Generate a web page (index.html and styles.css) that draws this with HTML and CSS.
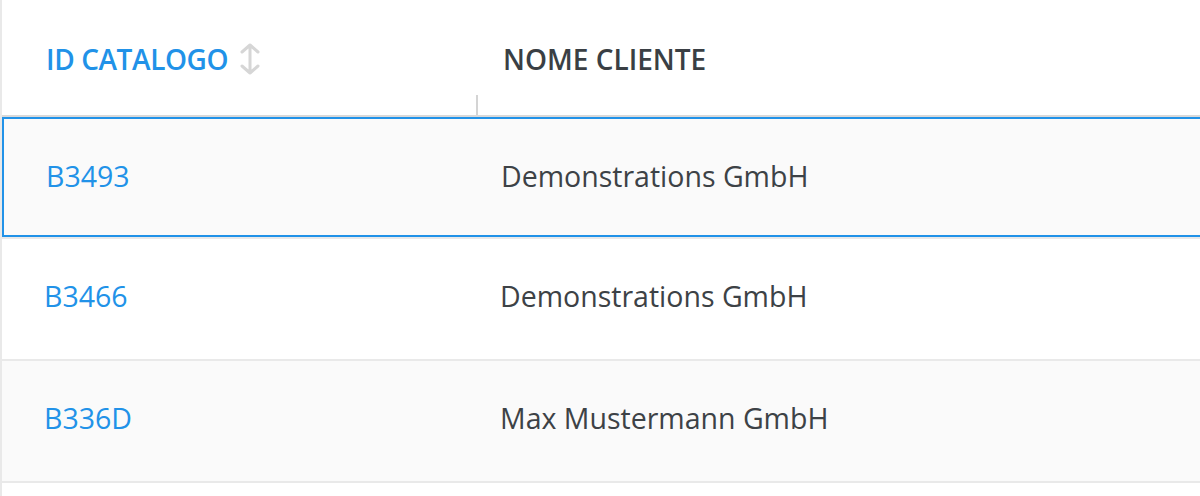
FILE: index.html
```html
<!DOCTYPE html>
<html>
<head>
<meta charset="utf-8">
<link rel="stylesheet" href="styles.css">
</head>
<body>
<div class="grid">
  <div class="row head">
    <div class="cell c1"><span class="h-link">ID CATALOGO</span>
      <svg class="sort" width="22" height="34" viewBox="0 0 22 34"><path d="M11 3 V31 M3 10 L11 3 L19 10 M3 24 L11 31 L19 24" fill="none" stroke="#d6d6d6" stroke-width="3" stroke-linecap="round" stroke-linejoin="round"/></svg>
      <span class="resizer"></span>
    </div>
    <div class="cell c2"><span class="h-text">NOME CLIENTE</span></div>
  </div>
  <div class="row alt selected">
    <div class="cell c1"><span class="link">B3493</span></div>
    <div class="cell c2">Demonstrations GmbH</div>
  </div>
  <div class="row">
    <div class="cell c1"><span class="link">B3466</span></div>
    <div class="cell c2">Demonstrations GmbH</div>
  </div>
  <div class="row alt">
    <div class="cell c1"><span class="link">B336D</span></div>
    <div class="cell c2">Max Mustermann GmbH</div>
  </div>
</div>
</body>
</html>
```

FILE: styles.css
```css
html, body {
  margin: 0;
  padding: 0;
  background: #ffffff;
}
body {
  font-family: "Open Sans", "Liberation Sans", sans-serif;
  font-size: 28.5px;
  color: #3d4246;
  overflow: hidden;
}
.grid {
  border-left: 2px solid #e9e9e9;
  height: 496px;
}
.row {
  display: flex;
  align-items: center;
  height: 122px;
  box-sizing: border-box;
  padding-bottom: 6px;
  border-bottom: 2px solid #e9e9e9;
}
.row.head {
  height: 117px;
  padding-bottom: 0;
  padding-top: 2px;
  border-bottom-color: #d9d9d9;
}
.row.alt {
  background: #fafafa;
}
.row.selected {
  height: 122px;
  padding-bottom: 2px;
  box-shadow: inset 2px 0 0 #2192e8, inset 0 2px 0 #2192e8, inset 0 -2px 0 #2192e8;
  padding-left: 2px;
}
.cell {
  display: flex;
  align-items: center;
  height: 100%;
  box-sizing: border-box;
}
.c1 {
  width: 476px;
  flex: none;
  padding-left: 42px;
  position: relative;
}
.c2 {
  padding-left: 22px;
}
.row.selected .c1 { width: 474px; }
.row.selected .c2 { padding-left: 23px; }
.head .c1 { padding-left: 44px; }
.head .c2 { padding-left: 25px; }
.h-link {
  color: #2192e8;
  font-weight: 600;
  font-size: 28px;
  letter-spacing: -0.4px;
}
.h-text {
  font-weight: 600;
  font-size: 28px;
  color: #3a3f44;
}
.sort {
  margin-left: 11px;
}
.link {
  color: #2192e8;
  font-weight: 500;
}
.resizer {
  position: absolute;
  right: 0;
  bottom: 0;
  width: 2px;
  height: 20px;
  background: #d4d4d4;
}
```
